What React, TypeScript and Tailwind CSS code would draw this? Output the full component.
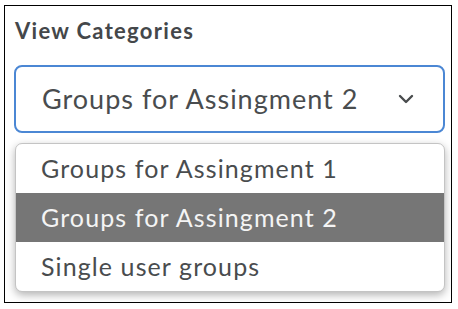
import React from 'react'

const options = ['Groups for Assingment 1', 'Groups for Assingment 2', 'Single user groups']

const Chevron = () => (
    <svg width="16" height="10" viewBox="0 0 16 10" fill="none">
        <path d="M2 2l6 6 6-6" stroke="#494c4e" strokeWidth="2.4" strokeLinecap="round" strokeLinejoin="round" />
    </svg>
)

export default function App() {
    const selected = 1
    return (
        <div className="w-[458px] h-[309px] bg-white pl-[4px] pt-[5px]" style={{ fontFamily: 'Lato, "Open Sans", sans-serif' }}>
            <div className="w-[448px] h-[298px] border border-black bg-white flex flex-col px-[9px] pt-[13px]">
                <div className="text-[22px] leading-[24px] font-bold tracking-[1.3px] text-[#44474a] pl-[1px]">View Categories</div>
                <div className="mt-[22px] h-[68px] w-[431px] rounded-[8px] border-2 border-[#4b87d4] flex items-center justify-between pl-[26px] pr-[29px] text-[27px] tracking-[1px] text-[#494c4e]">
                    <span>{options[selected]}</span>
                    <Chevron />
                </div>
                <div className="mt-[10px] ml-[1px] w-[430px] rounded-[7px] border border-[#c4c4c4] bg-white shadow-[0_3px_9px_rgba(0,0,0,0.3)] flex flex-col">
                    {options.map((o, i) => (
                        <div
                            key={o}
                            className={
                                i === selected
                                    ? 'h-[49px] flex items-center pl-[25px] text-[25px] tracking-[1.1px] bg-[#767676] text-[#f4f4f4]'
                                    : 'h-[49px] flex items-center pl-[25px] text-[25px] tracking-[1.1px] text-[#494c4e]'
                            }
                        >
                            {o}
                        </div>
                    ))}
                </div>
            </div>
        </div>
    )
}
